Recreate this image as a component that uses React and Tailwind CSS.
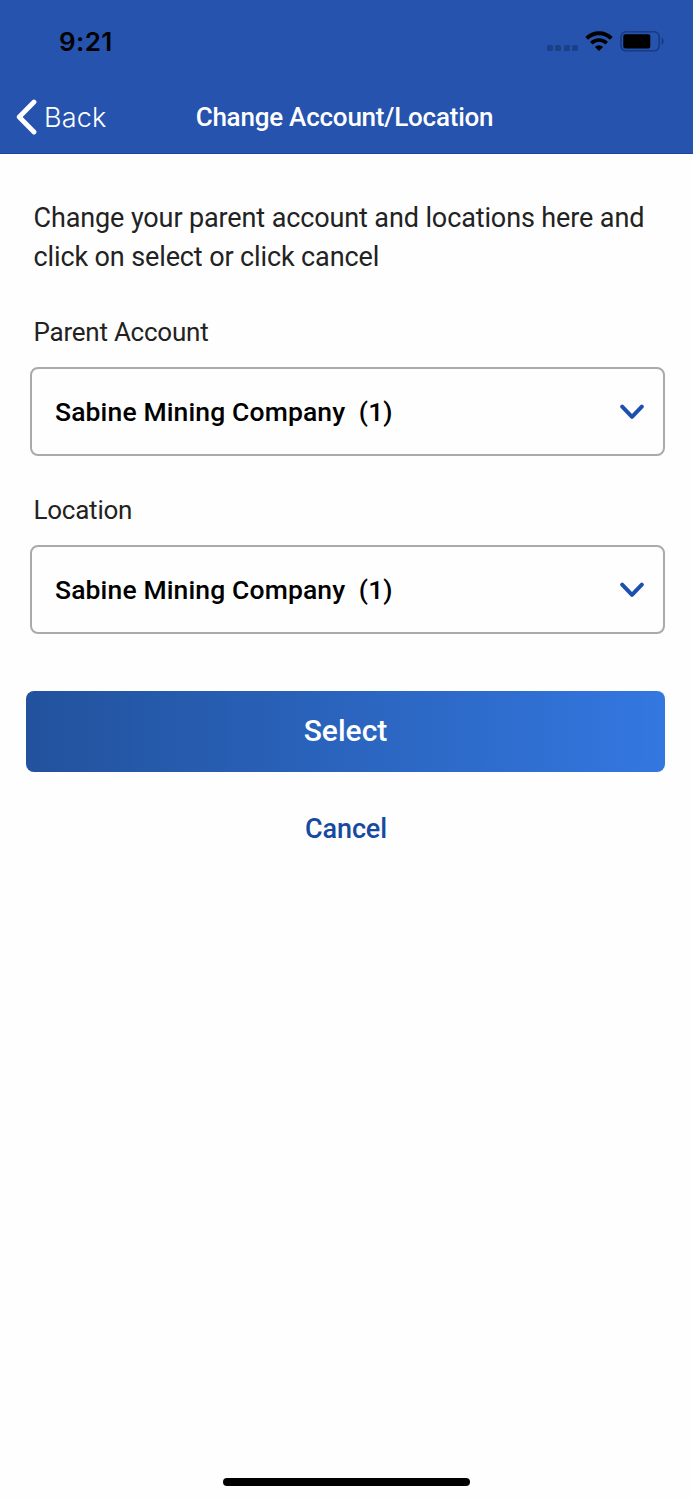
const fields = [
  { label: "Parent Account", value: "Sabine Mining Company", count: 1 },
  { label: "Location", value: "Sabine Mining Company", count: 1 },
];

const StatusBar = () => (
  <div className="flex h-[80px] items-start justify-between pl-[59px] pr-[28px] pt-[25px] text-black">
    <span className="font-['Inter',sans-serif] text-[26px] leading-[34px] font-semibold tracking-[0.4px]">
      9:21
    </span>

    <div className="flex pt-[5px]">
      <div className="mr-[7px] mt-[15px] flex gap-[2.4px]">
        {[0, 1, 2, 3].map((i) => (
          <span key={i} className="size-[6px] rounded-[1.5px] bg-[#1d4084]" />
        ))}
      </div>

      <svg width="28" height="21" viewBox="0 0 28 21" fill="none" stroke="#000" strokeWidth="4">
        <path d="M1.7 8.3A17.3 17.3 0 0 1 26.3 8.3" />
        <path d="M6.3 13.2A11 11 0 0 1 21.7 13.2" strokeWidth="3.6" />
        <path d="M14 21L9.9 16.9A5.9 5.9 0 0 1 18.1 16.9Z" fill="#000" stroke="none" />
      </svg>

      <svg className="ml-[7px]" width="45" height="22" viewBox="0 0 45 22" fill="none">
        <rect x="1" y="1.8" width="38.2" height="19" rx="5" stroke="#173a80" strokeWidth="1.6" />
        <rect x="3.3" y="4.2" width="27" height="14.4" rx="2" fill="#000" />
        <path d="M41.6 7.8c2.8 1.3 2.8 5.7 0 7Z" fill="#173a80" />
      </svg>
    </div>
  </div>
);

const NavBar = () => (
  <div className="grid h-[73px] grid-cols-[1fr_auto_1fr] items-center text-white">
    <button className="flex items-center pl-[16px]">
      <svg width="21" height="36" viewBox="0 0 21 36" fill="none" stroke="#fff" strokeWidth="4.8" strokeLinecap="round" strokeLinejoin="round">
        <path d="M18 3L3.2 18L18 33" />
      </svg>
      <span className="ml-[7px] pt-[2px] font-['Inter',sans-serif] text-[27px] leading-[36px] font-[350] tracking-[0.2px]">
        Back
      </span>
    </button>
    <h1 className="-ml-[4px] text-[26px] leading-[36px] font-medium tracking-[-0.22px]">
      Change Account/Location
    </h1>
  </div>
);

const SelectField = ({ label, value, count }) => (
  <div className="mb-[35px]">
    <label className="mb-[16px] block pl-[3.5px] text-[26px] leading-[38px] tracking-[-0.24px] text-[#222]">
      {label}
    </label>
    <button className="flex h-[89px] w-full items-center justify-between rounded-[8px] border-2 border-[#aaa] pl-[23px] pr-[19px] text-black">
      <span className="whitespace-pre pt-[1px] text-[26.5px] leading-[36px] font-medium tracking-[0.13px]">
        {value}
        {"  "}({count})
      </span>
      <svg width="24" height="16" viewBox="0 0 24 16" fill="none" stroke="#1d4fae" strokeWidth="4" strokeLinecap="round" strokeLinejoin="round">
        <path d="M2.2 2.6L12 12.8L21.8 2.6" />
      </svg>
    </button>
  </div>
);

export default function App() {
  return (
    <div className="flex h-[1500px] w-[693px] flex-col bg-[#fefefe] font-['Roboto',sans-serif]">
      <header className="h-[154px] shrink-0 border-b border-[#1a469f] bg-[#2553ae]">
        <StatusBar />
        <NavBar />
      </header>

      <main className="flex flex-1 flex-col pl-[30px] pr-[28px] pt-[45px]">
        <p className="mb-[37px] pl-[3.5px] text-[27px] leading-[38.5px] tracking-[-0.12px] text-[#222]">
          Change your parent account and locations here and
          <br />
          click on select or click cancel
        </p>

        {fields.map((field) => (
          <SelectField key={field.label} {...field} />
        ))}

        <button className="-ml-[4px] mt-[22px] h-[81px] rounded-[8px] bg-linear-to-r from-[#22529d] to-[#3377e0] pb-[2px] text-[30px] leading-[40px] font-medium text-white">
          Select
        </button>
        <button className="mr-[3px] mt-[38px] self-center text-[27px] leading-[38px] font-medium tracking-[-0.1px] text-[#174a9f]">
          Cancel
        </button>
      </main>

      <div className="mb-[14px] h-[8px] w-[247px] self-center rounded-full bg-black" />
    </div>
  );
}
